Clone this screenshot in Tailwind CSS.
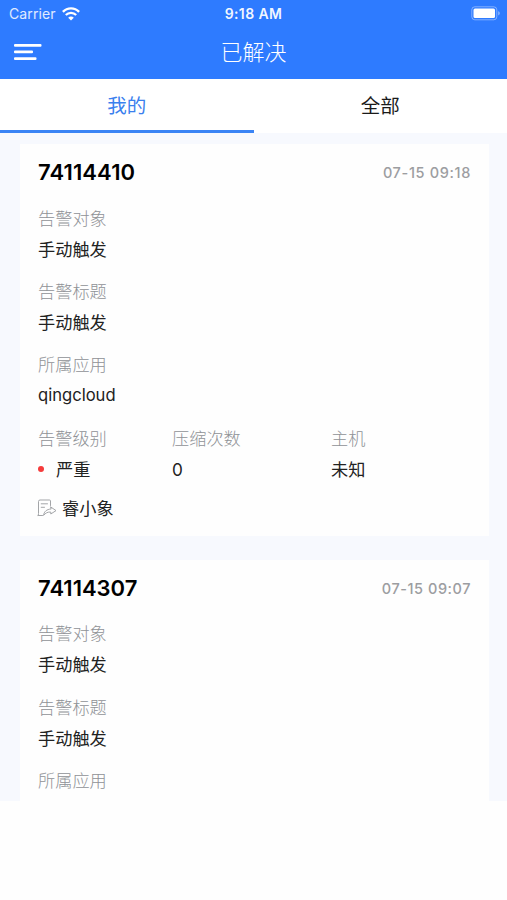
<!DOCTYPE html>
<html lang="zh-CN">
<head>
    <meta charset="UTF-8">
    <meta name="viewport" content="width=device-width, initial-scale=1.0">
    <title>已解决</title>
    <script src="https://cdn.jsdelivr.net/npm/@tailwindcss/browser@4"></script>
    <style>
        body {
            font-family: 'Inter', 'Noto Sans CJK SC', sans-serif;
        }
    </style>
</head>
<body class="h-[900px] overflow-hidden bg-[#fefefe] text-[#222]">

    <!-- Header -->
    <header class="h-[79px] bg-[#2e7bff] text-white">
        <!-- Status bar -->
        <div class="grid h-[27px] grid-cols-3 items-center px-[6px]">
            <div class="flex items-center gap-[6px] pl-[3px]">
                <span class="text-[14px] leading-none tracking-[0.1px] text-white/85">Carrier</span>
                <svg class="h-[14px] w-[18px]" viewBox="0 0 18 14" fill="none" stroke="#fff">
                    <path d="M0.9 4.9C5.4 0.2 12.6 0.2 17.1 4.9" stroke-width="2.4"/>
                    <path d="M3.8 8.1C6.7 5.1 11.3 5.1 14.2 8.1" stroke-width="2.2"/>
                    <path d="M9 13.6L6.2 10.7C7.8 9.1 10.2 9.1 11.8 10.7Z" fill="#fff" stroke="none"/>
                </svg>
            </div>
            <span class="pt-px text-center text-[14px] font-semibold leading-none tracking-[0.4px] text-white/95">9:18 AM</span>
            <svg class="h-[15px] w-[30px] justify-self-end" viewBox="0 0 30 15">
                <rect x="0.8" y="0.8" width="25" height="13" rx="3" fill="none" stroke="#fff" stroke-opacity="0.4"/>
                <rect x="2.5" y="2.5" width="21.5" height="9.5" rx="1.5" fill="#fff"/>
                <path d="M27.2 5.2C29.3 5.8 29.3 8.8 27.2 9.4Z" fill="#fff" fill-opacity="0.45"/>
            </svg>
        </div>
        <!-- Nav bar -->
        <div class="grid h-[50px] grid-cols-3 items-center px-[14px]">
            <svg class="h-[18px] w-[28px]" viewBox="0 0 28 18" fill="#fff">
                <rect x="0" y="1" width="27.5" height="2.7" rx="1"/>
                <rect x="0" y="7.6" width="19" height="2.7" rx="1"/>
                <rect x="0" y="14.2" width="22.5" height="2.7" rx="1"/>
            </svg>
            <h1 class="text-center text-[22px] font-light leading-none">已解决</h1>
        </div>
    </header>

    <!-- Tabs -->
    <nav class="grid h-[54px] grid-cols-2 bg-white text-center text-[19.5px] leading-[55px]">
        <div class="h-[54px] border-b-3 border-[#3a84f5] text-[#3a80ee]">我的</div>
        <div class="text-[#1a1a1a]">全部</div>
    </nav>

    <!-- Alert list -->
    <main class="h-[668px] overflow-hidden bg-[#f7f9fe] pl-5 pr-[18px] pt-[11px] text-[17.2px] leading-[31px]">
        <section class="mb-6 h-[392px] bg-[#fefefe] px-[18px] pt-[13px]">
            <div class="flex items-center justify-between">
                <h2 class="text-[22px] font-semibold tracking-[0.1px] text-black">74114410</h2>
                <time class="text-[14.5px] font-medium tracking-[0.65px] text-[#9c9da1]">07-15 09:18</time>
            </div>
            <dl class="mt-[15px] flex flex-col gap-[11.2px]">
                <div>
                    <dt class="font-light text-[#8f9296]">告警对象</dt>
                    <dd>手动触发</dd>
                </div>
                <div>
                    <dt class="font-light text-[#8f9296]">告警标题</dt>
                    <dd>手动触发</dd>
                </div>
                <div>
                    <dt class="font-light text-[#8f9296]">所属应用</dt>
                    <dd class="text-[16.6px]">qingcloud</dd>
                </div>
                <div class="grid grid-cols-[134px_159px_1fr]">
                    <div>
                        <dt class="font-light text-[#8f9296]">告警级别</dt>
                        <dd class="flex items-center gap-3">
                            <span class="size-[6px] rounded-full bg-[#f53b3b]"></span>严重
                        </dd>
                    </div>
                    <div>
                        <dt class="font-light text-[#8f9296]">压缩次数</dt>
                        <dd>0</dd>
                    </div>
                    <div>
                        <dt class="font-light text-[#8f9296]">主机</dt>
                        <dd>未知</dd>
                    </div>
                </div>
            </dl>
            <div class="mt-[8.4px] flex items-center gap-[5px]">
                <svg class="-ml-px h-[18px] w-[20px]" viewBox="0 0 20 18" fill="none" stroke="#a3a5a8" stroke-linecap="round" stroke-linejoin="round">
                    <path d="M13.5 6.5V2Q13.5 1 12.5 1H3Q1.5 1 1.5 2.5V14.5Q1.5 16.5 0.7 16.5H5.5"/>
                    <path d="M4.2 4.8H10.5M4.2 8.3H7.5"/>
                    <path d="M13.8 8L19 11.6L13.8 15V13.1C10.5 12.8 8.6 14 6.6 16.4C7 12.6 9.6 10.3 13.8 10Z"/>
                </svg>
                <span>睿小象</span>
            </div>
        </section>

        <section class="h-[392px] bg-[#fefefe] px-[18px] pt-[13px]">
            <div class="flex items-center justify-between">
                <h2 class="text-[22px] font-semibold text-black">74114307</h2>
                <time class="text-[14.5px] font-medium tracking-[0.55px] text-[#9c9da1]">07-15 09:07</time>
            </div>
            <dl class="mt-[14.4px] flex flex-col gap-[11.2px]">
                <div>
                    <dt class="font-light text-[#8f9296]">告警对象</dt>
                    <dd>手动触发</dd>
                </div>
                <div>
                    <dt class="font-light text-[#8f9296]">告警标题</dt>
                    <dd>手动触发</dd>
                </div>
                <div>
                    <dt class="font-light text-[#8f9296]">所属应用</dt>
                </div>
            </dl>
        </section>
    </main>

</body>
</html>
